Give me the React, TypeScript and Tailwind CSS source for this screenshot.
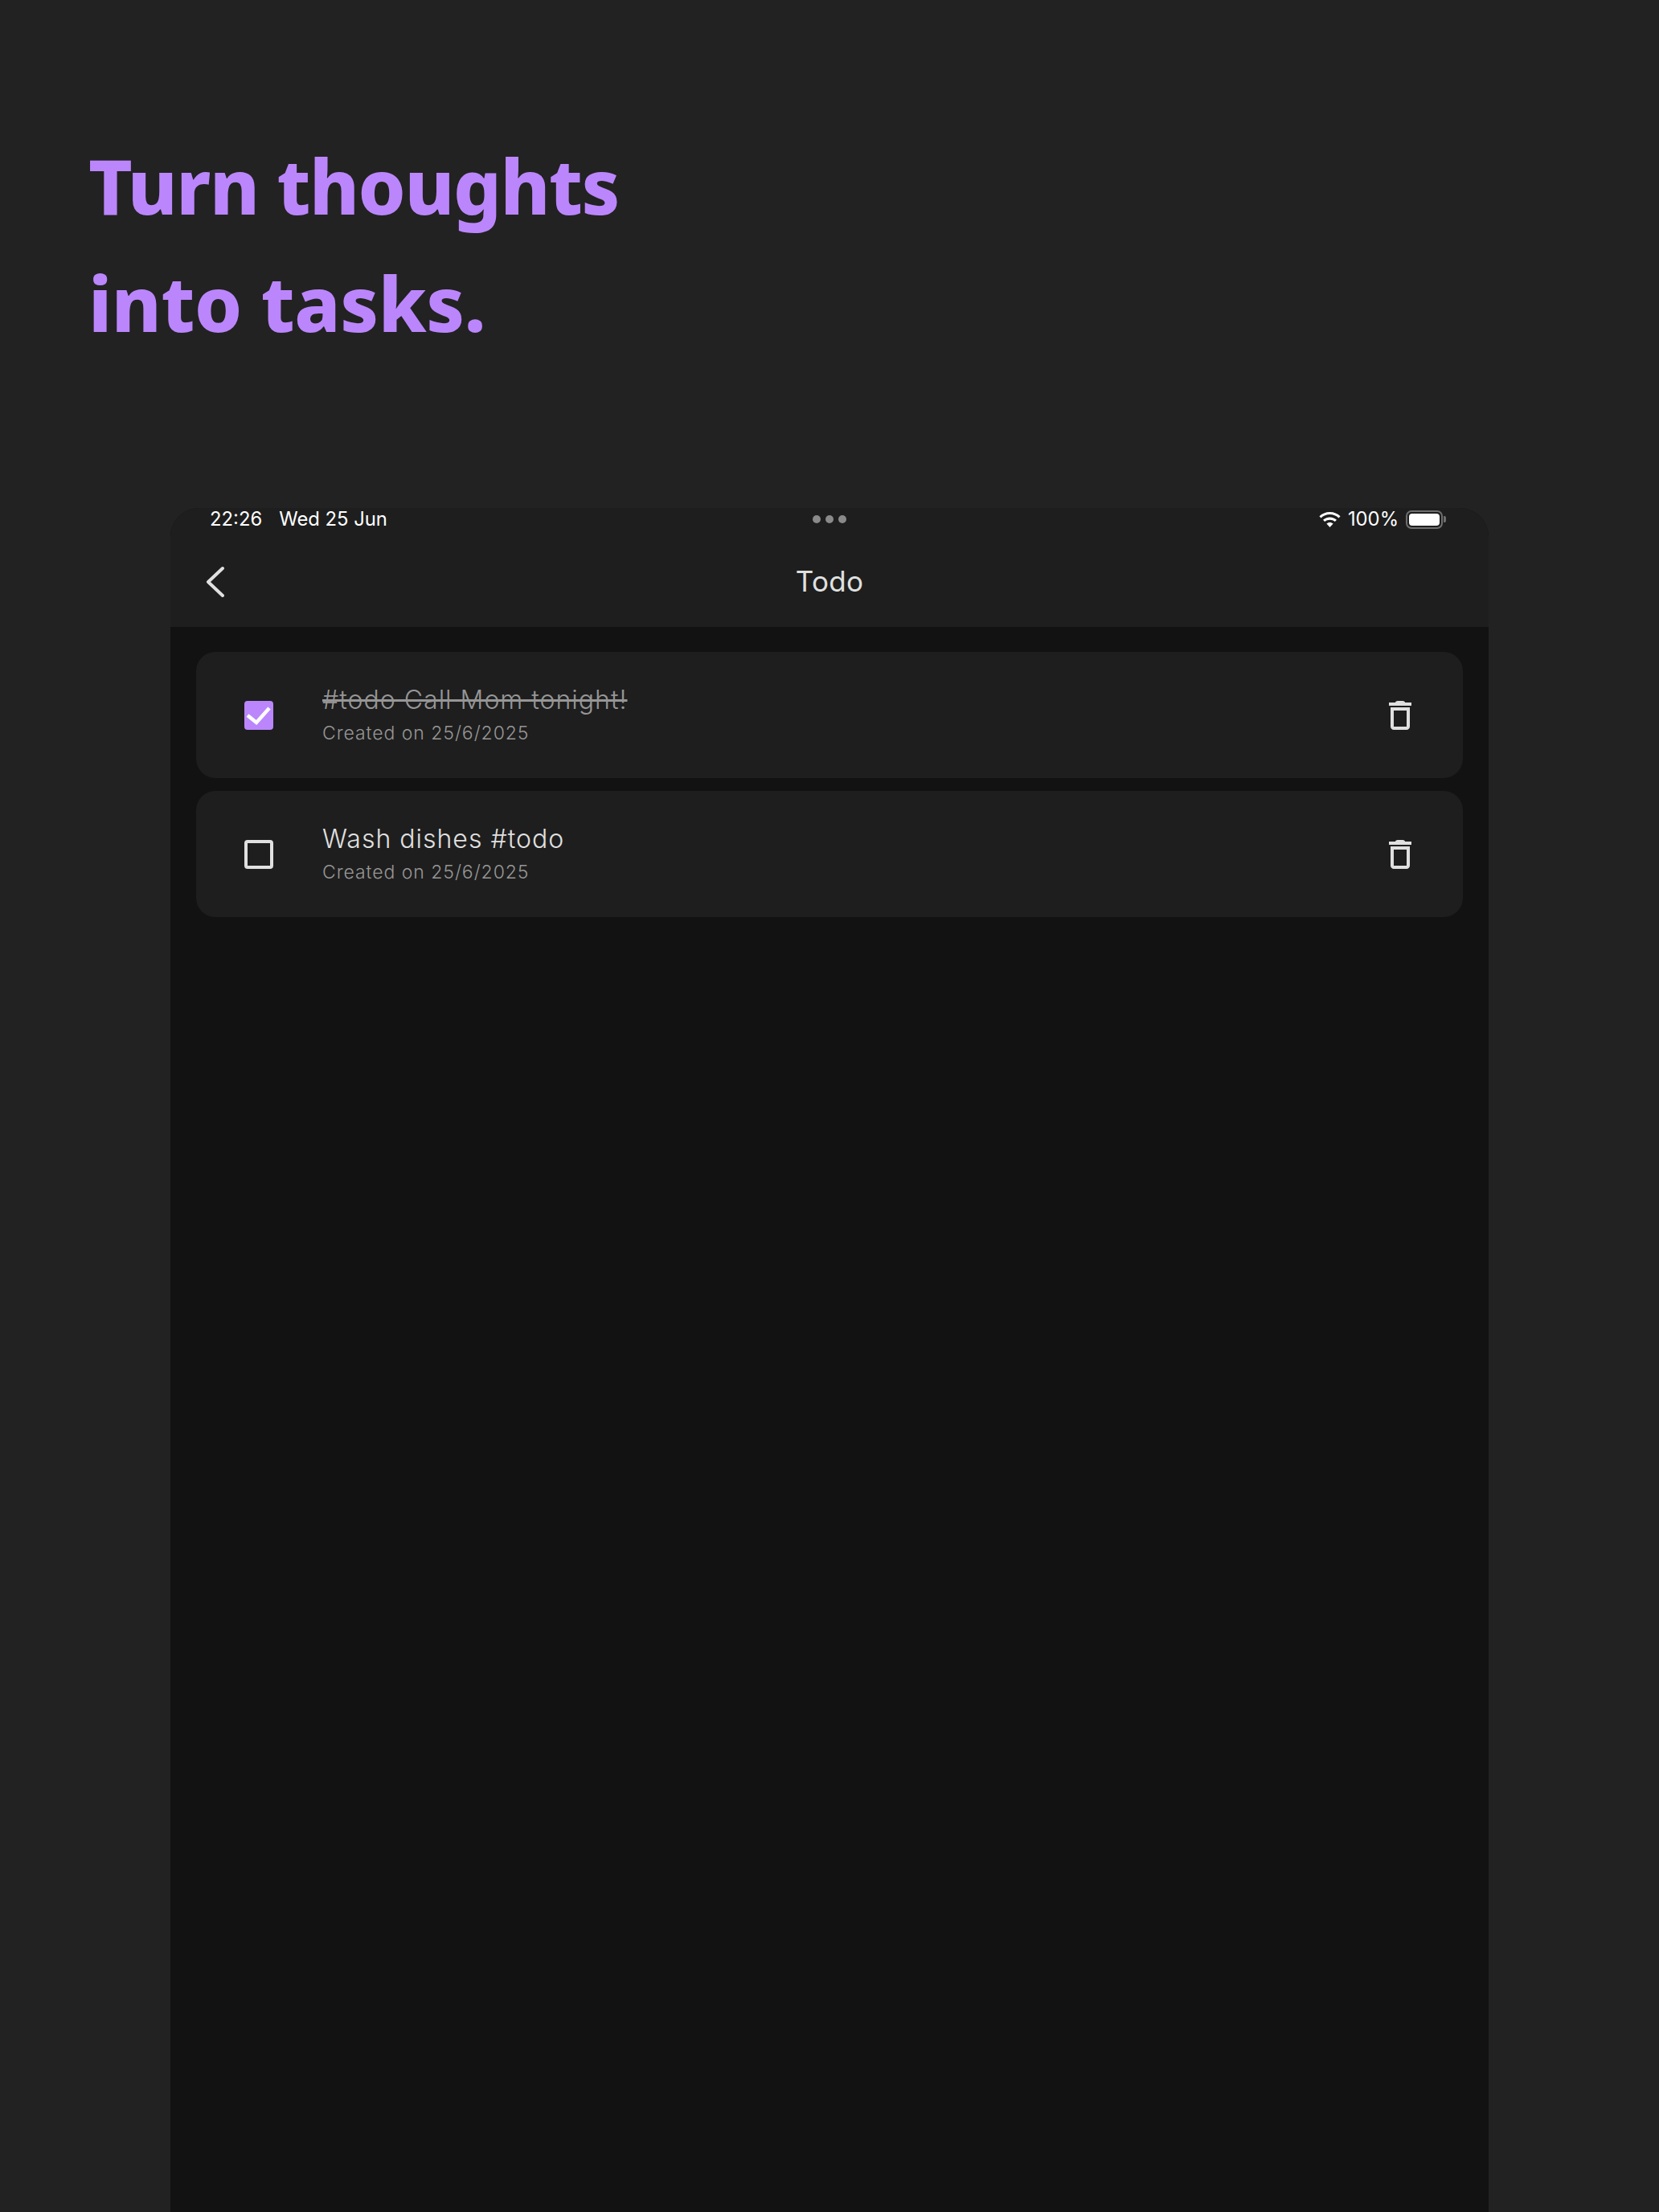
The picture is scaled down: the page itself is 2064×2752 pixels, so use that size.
const tasks = [
  { id: 1, title: "#todo Call Mom tonight!", created: "Created on 25/6/2025", done: true },
  { id: 2, title: "Wash dishes #todo", created: "Created on 25/6/2025", done: false },
]

function Checkbox({ checked }: { checked: boolean }) {
  if (checked) {
    return (
      <div className="flex h-[36px] w-[36px] shrink-0 items-center justify-center rounded-[4px] bg-[#bb86fc]">
        <svg viewBox="0 0 36 36" className="h-[36px] w-[36px]" fill="none">
          <path d="M4 18l11 9L31 9" stroke="#ffffff" strokeWidth="4.500" />
        </svg>
      </div>
    )
  }
  return <div className="h-[36px] w-[36px] shrink-0 rounded-[4px] border-[4px] border-[#e0e0e0]" />
}

function TrashIcon() {
  return (
    <svg viewBox="0 0 28 36" className="h-[36px] w-[28px] shrink-0" fill="none">
      <path d="M0 2h28v4H0z M8 2c0-1 1-2 3-2h6c2 0 3 1 3 2z" fill="#e0e0e0" />
      <path d="M4 10h20v22c0 1-1 2-2 2H6c-1 0-2-1-2-2z" stroke="#e0e0e0" strokeWidth="4" />
    </svg>
  )
}

function WifiIcon() {
  return (
    <svg viewBox="0 0 27 19" className="h-[19px] w-[27px]" fill="#ffffff">
      <path d="M13.5 0C8.4 0 3.8 2 .4 5.2l2.1 2.2C5.4 4.8 9.2 3 13.5 3s8.1 1.8 11 4.4l2.1-2.2C23.200 2 18.600 0 13.500 0z" />
      <path d="M13.5 6.500c-3.300 0-6.300 1.300-8.500 3.300l2.200 2.200c1.700-1.400 3.900-2.300 6.300-2.300s4.600.9 6.300 2.300l2.200-2.200c-2.200-2-5.200-3.300-8.500-3.300z" />
      <path d="M13.500 13c-1.600 0-3 .6-4.100 1.500l4.100 4.500 4.100-4.500c-1.100-.9-2.500-1.500-4.100-1.500z" />
    </svg>
  )
}

function BatteryIcon() {
  return (
    <div className="flex items-center gap-[1px]">
      <div className="flex h-[23px] w-[46px] items-center justify-center rounded-[7px] border-[2px] border-[#6f6f6f]">
        <div className="h-[15px] w-[38px] rounded-[4px] bg-white" />
      </div>
      <div className="h-[8px] w-[3px] rounded-r-[2px] bg-[#6f6f6f]" />
    </div>
  )
}

export default function App() {
  return (
    <div className="flex h-[2752px] flex-col overflow-hidden bg-[#222222]">
      <div className="h-[632px] shrink-0 pl-[110px] pt-[158px]">
        <h1 className="font-['Noto_Sans',sans-serif] text-[94px] font-extrabold leading-[146px] text-[#bb86fc]">
          <span className="tracking-[-1.400px]">Turn thoughts</span>
          <br />
          <span className="tracking-[-0.400px]">into tasks.</span>
        </h1>
      </div>

      <div className="ml-[212px] flex w-[1640px] flex-1 flex-col overflow-hidden rounded-t-[36px] bg-[#121212] font-['Inter',sans-serif]">
        <div className="bg-[#1e1e1e]">
          <div className="grid h-[28px] grid-cols-3 items-center pl-[49px] pr-[53px] text-[23.800px] leading-[28px] text-white">
            <div className="flex gap-[21px]">
              <span>22:26</span>
              <span>Wed 25 Jun</span>
            </div>
            <div className="flex justify-center gap-[6px] pl-[5px]">
              <span className="h-[10px] w-[10px] rounded-full bg-[#8a8a8a]" />
              <span className="h-[10px] w-[10px] rounded-full bg-[#8a8a8a]" />
              <span className="h-[10px] w-[10px] rounded-full bg-[#8a8a8a]" />
            </div>
            <div className="flex items-center justify-end gap-[9px]">
              <WifiIcon />
              <span>100%</span>
              <BatteryIcon />
            </div>
          </div>
          <div className="relative flex h-[120px] items-center justify-center">
            <svg viewBox="0 0 24 40" className="absolute left-[43px] top-[44px] h-[40px] w-[24px]" fill="none">
              <path d="M22 3L4 20l18 17" stroke="#e0e0e0" strokeWidth="4" strokeLinecap="round" strokeLinejoin="round" />
            </svg>
            <span className="pt-[7px] text-[35px] tracking-[0.300px] text-[#e0e0e0]">Todo</span>
          </div>
        </div>

        <div className="flex flex-col gap-[16px] px-[32px] pt-[31px]">
          {tasks.map((task) => (
            <div key={task.id} className="flex h-[157px] items-center rounded-[24px] bg-[#1e1e1e] pl-[60px] pr-[64px]">
              <Checkbox checked={task.done} />
              <div className="ml-[61px] flex-1 font-[350]">
                <div
                  className={
                    task.done
                      ? "text-[32px] leading-[44px] tracking-[1px] text-[#969696] line-through"
                      : "text-[32px] leading-[44px] tracking-[1px] text-[#e0e0e0]"
                  }
                >
                  {task.title}
                </div>
                <div className="text-[23px] leading-[38px] tracking-[0.950px] text-[#969696]">{task.created}</div>
              </div>
              <TrashIcon />
            </div>
          ))}
        </div>
      </div>
    </div>
  )
}
